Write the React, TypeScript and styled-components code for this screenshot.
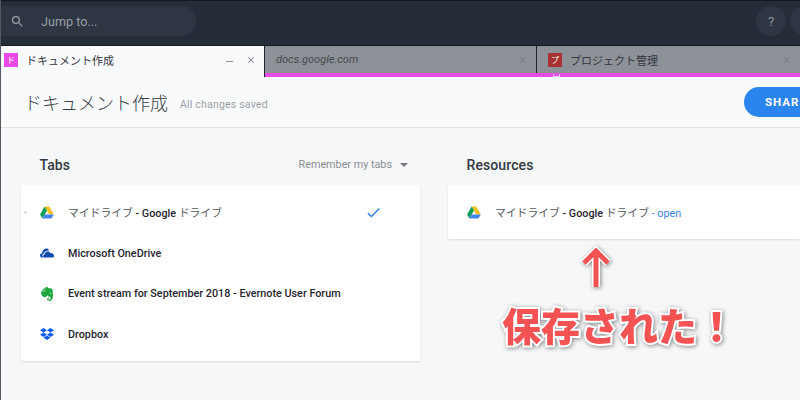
import styled, { createGlobalStyle } from "styled-components";
import { MdCheck, MdClose, MdSearch } from "react-icons/md";
import { FaDropbox } from "react-icons/fa";
import { SiEvernote } from "react-icons/si";

const GlobalStyle = createGlobalStyle`
  html, body {
    margin: 0;
    padding: 0;
    background: #f6f7f9;
  }
  body {
    font-family: Roboto, "Noto Sans CJK JP", sans-serif;
  }
`;

const Page = styled.div`
  position: relative;
  width: 800px;
  height: 400px;
  overflow: hidden;
  background: #f6f7f9;
  border-left: 1px solid #55585e;
  box-sizing: border-box;
`;
const TopBar = styled.div`
  height: 46px;
  margin-left: -1px;
  box-sizing: border-box;
  padding: 5px 0 0;
  background: #252d39;
  border-top: 1px solid #14181f;
  border-bottom: 1px solid #14181f;
  display: flex;
  justify-content: space-between;
`;
const SearchBox = styled.div`
  width: 196px;
  height: 30px;
  background: #2e3643;
  border-radius: 0 15px 15px 0;
  display: flex;
  align-items: center;
  padding-left: 10px;
  box-sizing: border-box;
  gap: 16px;
  color: #9a9ea5;
  font-size: 12.6px;
`;
const TopRight = styled.div`
  display: flex;
  gap: 4px;
  margin-right: -20px;
`;
const RoundBtn = styled.div`
  width: 30px;
  height: 30px;
  border-radius: 50%;
  background: #2e3643;
  color: #8b9098;
  font-size: 13px;
  display: flex;
  align-items: center;
  justify-content: center;
`;
const TabStrip = styled.div`
  display: flex;
  height: 31px;
  background: #f9fafc;
`;
const Tab = styled.div<{ $active?: boolean; $w: number }>`
  width: ${(p) => p.$w}px;
  flex: none;
  box-sizing: border-box;
  display: flex;
  align-items: center;
  height: ${(p) => (p.$active ? "31px" : "27px")};
  background: ${(p) => (p.$active ? "#f9fafc" : "#8d9198")};
  padding: 0 3px ${(p) => (p.$active ? "4px" : "0")} 0;
  border-right: 1px solid #1d222b;
  color: #2c2f35;
`;
const TabLine = styled.div`
  position: relative;
  flex: 1;
  display: flex;
  flex-direction: column;
  border-bottom: 4px solid #e84be8;
`;
const TabRow = styled.div`
  display: flex;
  height: 27px;
`;
const LineMark = styled.span`
  position: absolute;
  left: 288px;
  top: 28px;
  width: 5px;
  height: 2px;
  border: solid #f6cdf6;
  border-width: 0 1px 1px;
`;
const Favicon = styled.span<{ $bg: string; $left: number }>`
  width: 14px;
  height: 14px;
  flex: none;
  background: ${(p) => p.$bg};
  color: #fff;
  font-size: 8px;
  display: flex;
  align-items: center;
  justify-content: center;
  margin: 0 8px 0 ${(p) => p.$left}px;
`;
const TabTitle = styled.span<{ $italic?: boolean }>`
  flex: 1;
  white-space: nowrap;
  font-style: ${(p) => (p.$italic ? "italic" : "normal")};
  font-size: 11px;
  color: ${(p) => (p.$italic ? "#45494f" : "#33363c")};
  padding-left: ${(p) => (p.$italic ? "11px" : "0")};
`;
const TabCtl = styled.span`
  width: 21px;
  color: #777a80;
  display: flex;
  align-items: center;
  justify-content: center;
`;
const MinBar = styled.span`
  width: 7px;
  height: 1px;
  margin-top: 4px;
  background: #8a8d92;
`;
const Header = styled.div`
  height: 51px;
  box-sizing: border-box;
  background: #f9fafc;
  border-bottom: 1px solid #e3e4e7;
  display: flex;
  align-items: center;
  padding-left: 23px;
`;
const DocTitle = styled.h1`
  margin: 0;
  font-size: 18px;
  font-weight: 300;
  color: #3a3e45;
  white-space: nowrap;
`;
const Saved = styled.span`
  font-size: 10.5px;
  color: #9b9fa5;
  margin: 4px 0 0 12px;
  letter-spacing: 0.2px;
`;
const ShareBtn = styled.button`
  margin-left: auto;
  margin-right: -30px;
  width: 86px;
  height: 30px;
  flex: none;
  border: none;
  border-radius: 15px 0 0 15px;
  background: #2b85ee;
  color: #fff;
  font: 700 11.5px Roboto, sans-serif;
  letter-spacing: 1px;
  text-align: left;
  padding-left: 21px;
`;
const Columns = styled.div`
  display: grid;
  grid-template-columns: 399px 352px;
  column-gap: 28px;
  padding: 28px 0 0 20px;
`;
const SectionHead = styled.div`
  height: 29px;
  display: flex;
  align-items: flex-start;
  justify-content: space-between;
  padding: 0 12px 0 19px;
`;
const SectionTitle = styled.h2`
  margin: 0 0 0 -0.5px;
  font-size: 14px;
  line-height: 18px;
  font-weight: 500;
  color: #343841;
  letter-spacing: 0.1px;
`;
const Remember = styled.div`
  font-size: 10.8px;
  line-height: 18px;
  color: #8a8d92;
  display: flex;
  align-items: center;
  gap: 8px;
`;
const Caret = styled.span`
  width: 0;
  height: 0;
  border-left: 4px solid transparent;
  border-right: 4px solid transparent;
  border-top: 4px solid #77797e;
`;
const Card = styled.div`
  background: #fff;
  border-radius: 2px;
  box-shadow: 0 1px 2px rgba(0, 0, 0, 0.12);
  padding: 7px 0 6px;
`;
const Row = styled.div`
  position: relative;
  height: 40.7px;
  display: flex;
  align-items: center;
  padding-left: 19px;
  font-size: 10.8px;
  font-weight: 500;
  color: #1f2530;
  white-space: nowrap;
`;
const RowIcon = styled.span`
  width: 14px;
  height: 14px;
  flex: none;
  margin-right: 14px;
  display: flex;
  align-items: center;
  justify-content: center;
`;
const Jp = styled.span`
  font-weight: 400;
  color: #55585e;
`;
const OpenLink = styled.span`
  font-weight: 400;
  color: #3b82e8;
`;
const Dot = styled.span`
  position: absolute;
  left: 3px;
  top: 50%;
  margin-top: -1px;
  width: 3px;
  height: 3px;
  border-radius: 50%;
  background: #dcdde0;
`;
const Tick = styled.span`
  position: absolute;
  left: 344px;
  top: 12px;
  color: #2b85ee;
  display: flex;
`;
const Arrow = styled.svg`
  position: absolute;
  left: 577px;
  top: 245px;
  filter: drop-shadow(1px 1px 2px rgba(0, 0, 0, 0.45));
`;
const Callout = styled.div`
  position: absolute;
  left: 501px;
  top: 298px;
  font-family: "Noto Sans CJK JP", sans-serif;
  font-size: 39px;
  line-height: 52px;
  font-weight: 900;
  color: #f55353;
  white-space: nowrap;
  -webkit-text-stroke: 4px #fff;
  paint-order: stroke fill;
  filter: drop-shadow(1px 1px 2px rgba(0, 0, 0, 0.45));
`;

function DriveIcon() {
  return (
    <svg width="14" height="13" viewBox="0 0 14 13">
      <polygon points="4.6,0.5 9.2,0.5 13.8,8.4 9.2,8.4" fill="#f4c01e" />
      <polygon points="4.6,0.5 7,4.5 2.4,12.4 0.1,8.4" fill="#109d58" />
      <polygon points="4.7,8.4 13.8,8.4 11.5,12.4 2.4,12.4" fill="#4486f4" />
    </svg>
  );
}

function OneDriveIcon() {
  return (
    <svg width="14" height="10" viewBox="0 0 14 10">
      <path
        d="M2.6 9.6C.9 9.6 0 8.6 0 7.4c0-1.2.9-2.1 2-2.2C2.4 3 3.8.6 6.2.6c1.4 0 2.4.7 3 1.6-.5.1-1 .3-1.5.6C5.9 2.6 4.3 3.7 3.8 5.6 2.7 6 2.3 7 2.5 8c.1.6.4 1.2.9 1.6z"
        fill="#0f4ab0"
      />
      <path
        d="M4.4 9.6c-.9 0-1.3-.7-1.3-1.4 0-.8.6-1.4 1.3-1.5C4.5 5 5.9 3.4 7.7 3.4c1.2 0 2.2.7 2.7 1.6 1.9-.2 3.6 1.2 3.6 2.9 0 .9-.7 1.7-1.7 1.7z"
        fill="#0f4ab0"
      />
    </svg>
  );
}

export default function App() {
  return (
    <Page>
      <GlobalStyle />
      <TopBar>
        <SearchBox>
          <MdSearch size={15} />
          Jump to...
        </SearchBox>
        <TopRight>
          <RoundBtn>?</RoundBtn>
          <RoundBtn />
        </TopRight>
      </TopBar>
      <TabStrip>
        <Tab $active $w={264}>
          <Favicon $bg="#e84be8" $left={3}>ド</Favicon>
          <TabTitle>ドキュメント作成</TabTitle>
          <TabCtl>
            <MinBar />
          </TabCtl>
          <TabCtl>
            <MdClose size={10} />
          </TabCtl>
        </Tab>
        <TabLine>
          <TabRow>
            <Tab $w={272}>
              <TabTitle $italic>docs.google.com</TabTitle>
              <TabCtl>
                <MdClose size={10} />
              </TabCtl>
            </Tab>
            <Tab $w={264}>
              <Favicon $bg="#a83232" $left={11}>プ</Favicon>
              <TabTitle>プロジェクト管理</TabTitle>
              <TabCtl>
                <MdClose size={10} />
              </TabCtl>
            </Tab>
          </TabRow>
          <LineMark />
        </TabLine>
      </TabStrip>
      <Header>
        <DocTitle>ドキュメント作成</DocTitle>
        <Saved>All changes saved</Saved>
        <ShareBtn>SHARE</ShareBtn>
      </Header>
      <Columns>
        <section>
          <SectionHead>
            <SectionTitle>Tabs</SectionTitle>
            <Remember>
              Remember my tabs
              <Caret />
            </Remember>
          </SectionHead>
          <Card>
            <Row>
              <Dot />
              <RowIcon>
                <DriveIcon />
              </RowIcon>
              <span>
                <Jp>マイドライブ</Jp> - Google <Jp>ドライブ</Jp>
              </span>
              <Tick>
                <MdCheck size={17} />
              </Tick>
            </Row>
            <Row>
              <RowIcon>
                <OneDriveIcon />
              </RowIcon>
              Microsoft OneDrive
            </Row>
            <Row>
              <RowIcon>
                <SiEvernote size={14} color="#1fa83d" />
              </RowIcon>
              Event stream for September 2018 - Evernote User Forum
            </Row>
            <Row>
              <RowIcon>
                <FaDropbox size={14} color="#0d5cf0" />
              </RowIcon>
              Dropbox
            </Row>
          </Card>
        </section>
        <section>
          <SectionHead>
            <SectionTitle>Resources</SectionTitle>
          </SectionHead>
          <Card>
            <Row>
              <RowIcon>
                <DriveIcon />
              </RowIcon>
              <span>
                <Jp>マイドライブ</Jp> - Google <Jp>ドライブ</Jp> <OpenLink>- open</OpenLink>
              </span>
            </Row>
          </Card>
        </section>
      </Columns>
      <Arrow width="36" height="46" viewBox="0 0 36 46">
        <path
          d="M18 42V6M6 18L18 6L30 18"
          fill="none"
          stroke="#fff"
          strokeWidth="8"
        />
        <path d="M18 42V6M6 18L18 6L30 18" fill="none" stroke="#f55353" strokeWidth="5" />
      </Arrow>
      <Callout>保存された！</Callout>
    </Page>
  );
}
